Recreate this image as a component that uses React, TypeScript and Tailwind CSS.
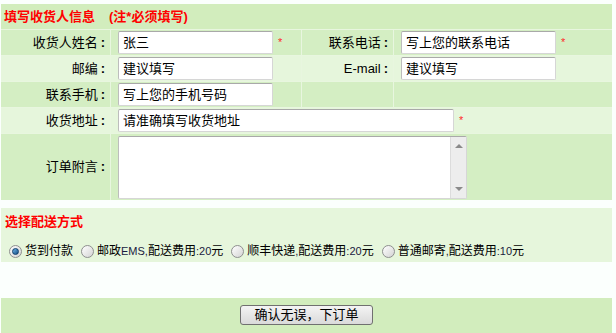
const font = "font-['Liberation_Sans','Noto_Sans_CJK_SC',sans-serif]"

function Field({ value, width }: { value: string; width: string }) {
  return (
    <div
      className={`${width} h-[23px] flex items-center pl-[4px] bg-white rounded-[2px] border border-[#d6d6d6] border-t-[#a9a9a9] border-l-[#bdbdbd] text-[13px] leading-[16px] text-black`}
    >
      {value}
    </div>
  )
}

function Star() {
  return <span className="ml-[5px] text-[11px] leading-none text-[#ff2a2a]">*</span>
}

function Label({ text, bg, tall }: { text: string; bg: string; tall?: boolean }) {
  return (
    <div
      className={`${bg} ${tall ? "h-[66px]" : "h-[25px]"} flex items-center justify-end pr-[5px] text-[13px] leading-[16px]`}
    >
      {text}
      <span className="ml-[3px] font-bold">:</span>
    </div>
  )
}

// latin runs in the reference are narrow half-width glyphs, so shrink them
function Mixed({ text }: { text: string }) {
  const parts = text.split(/([A-Za-z0-9,:]+)/)
  return (
    <>
      {parts.map((p, i) =>
        /[A-Za-z0-9,:]/.test(p) ? (
          <span key={i} className="text-[11px] text-[#1a1a40]">
            {p}
          </span>
        ) : (
          <span key={i}>{p}</span>
        ),
      )}
    </>
  )
}

function Radio({ checked, label }: { checked?: boolean; label: string }) {
  return (
    <label className="flex items-center">
      <span className="w-[13px] h-[13px] rounded-full border border-[#8e8f8f] bg-gradient-to-br from-white to-[#d4d4d4] flex items-center justify-center">
        {checked && (
          <span className="w-[7px] h-[7px] rounded-full bg-gradient-to-br from-[#6fb6e8] to-[#124e86] border border-[#0f3e6d]" />
        )}
      </span>
      <span className="ml-[3px] text-[12px] leading-[16px]">
        <Mixed text={label} />
      </span>
    </label>
  )
}

const green = "bg-[#d4eec3]"
const light = "bg-[#e6f6dc]"

export default function App() {
  return (
    <div className={`min-h-screen bg-[#fbfffd] text-black ${font}`}>
      <div className="w-[612px] pl-px pt-[4px]">
        <div className="grid grid-cols-[109px_190px_91px_218px] gap-px bg-[#e8f6df]">
          <div className="col-span-4 h-[25px] bg-[#d2edbd] flex items-center pl-[3px] text-[13px] leading-[16px] font-bold text-[#ff0000]">
            填写收货人信息
            <span className="ml-[14px]">(注*必须填写)</span>
          </div>

          <Label text="收货人姓名" bg={green} />
          <div className={`h-[25px] ${green} flex items-center pl-[7px]`}>
            <Field value="张三" width="w-[155px]" />
            <Star />
          </div>
          <Label text="联系电话" bg={green} />
          <div className={`h-[25px] ${green} flex items-center pl-[7px]`}>
            <Field value="写上您的联系电话" width="w-[155px]" />
            <Star />
          </div>

          <Label text="邮编" bg={light} />
          <div className={`h-[25px] ${light} flex items-center pl-[7px]`}>
            <Field value="建议填写" width="w-[155px]" />
          </div>
          <Label text="E-mail" bg={light} />
          <div className={`h-[25px] ${light} flex items-center pl-[7px]`}>
            <Field value="建议填写" width="w-[155px]" />
          </div>

          <Label text="联系手机" bg={green} />
          <div className={`h-[25px] ${green} flex items-center pl-[7px]`}>
            <Field value="写上您的手机号码" width="w-[155px]" />
          </div>
          <div className={`h-[25px] ${green}`} />
          <div className={`h-[25px] ${green}`} />

          <Label text="收货地址" bg={light} />
          <div className={`col-span-3 h-[25px] ${light} flex items-center pl-[7px]`}>
            <Field value="请准确填写收货地址" width="w-[336px]" />
            <Star />
          </div>

          <Label text="订单附言" bg={green} tall />
          <div className={`col-span-3 h-[66px] ${green} flex items-center pl-[7px]`}>
            <div className="w-[349px] h-[63px] flex bg-white border border-[#d6d6d6] border-t-[#a9a9a9] border-l-[#bdbdbd] rounded-[2px]">
              <div className="flex-1" />
              <div className="w-[16px] bg-[#ededed] border-l border-[#dcdcdc] flex flex-col items-center justify-between py-[7px]">
                <span className="w-0 h-0 border-x-[4px] border-x-transparent border-b-[4px] border-b-[#8a8a8a]" />
                <span className="w-0 h-0 border-x-[4px] border-x-transparent border-t-[4px] border-t-[#8a8a8a]" />
              </div>
            </div>
          </div>
        </div>

        <div className={`mt-[8px] h-[54px] ${light} pl-[4px] pt-[6px]`}>
          <div className="text-[13px] leading-[16px] font-bold text-[#ff0000]">选择配送方式</div>
          <div className="mt-[13px] flex items-center gap-[8px] pl-[4px]">
            <Radio checked label="货到付款" />
            <Radio label="邮政EMS,配送费用:20元" />
            <Radio label="顺丰快递,配送费用:20元" />
            <Radio label="普通邮寄,配送费用:10元" />
          </div>
        </div>

        <div className="h-[36px]" />

        <div className="h-[40px] bg-[#d2edbd] flex justify-center pt-[7px]">
          <button className="h-[20px] px-[13px] rounded-[3px] border border-[#707070] bg-gradient-to-b from-[#f4f4f4] to-[#dadada] text-[13px] leading-[16px] text-black">
            确认无误，下订单
          </button>
        </div>
      </div>
    </div>
  )
}
